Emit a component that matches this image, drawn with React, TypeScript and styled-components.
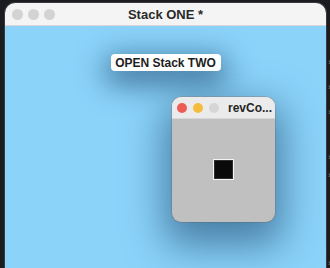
import React from "react";
import styled, { createGlobalStyle } from "styled-components";

const Global = createGlobalStyle`
  html, body { margin: 0; padding: 0; background: #1b1c1f; overflow: hidden; }
  body { font-family: "Liberation Sans", Arial, sans-serif; }
`;

const Desktop = styled.div`
  display: flex;
  height: 268px;
  padding: 3px 0 0 5px;
  box-sizing: border-box;
  gap: 1px;
`;

const Window = styled.div`
  width: 321px;
  display: flex;
  flex-direction: column;
  border-radius: 10px 10px 0 0;
  overflow: hidden;
  box-shadow: 0 0 0 1px #3a3a3c;
`;

const TitleBar = styled.div<{ $h: number; $bg: string }>`
  height: ${(p) => p.$h}px;
  flex: none;
  display: flex;
  align-items: center;
  position: relative;
  background: ${(p) => p.$bg};
  border-bottom: 1px solid #d8d8d8;
  box-sizing: border-box;
`;

const Lights = styled.div<{ $left: number; $gap: number }>`
  display: flex;
  gap: ${(p) => p.$gap}px;
  padding-left: ${(p) => p.$left}px;
`;

const Light = styled.span<{ $c: string; $size: number }>`
  width: ${(p) => p.$size}px;
  height: ${(p) => p.$size}px;
  border-radius: 50%;
  background: ${(p) => p.$c};
  display: block;
`;

const MainTitle = styled.div`
  position: absolute;
  left: 0;
  right: 0;
  text-align: center;
  font-weight: bold;
  font-size: 13px;
  color: #2a2a2a;
`;

const SmallTitle = styled.div`
  margin-left: 9px;
  font-weight: bold;
  font-size: 12px;
  color: #262626;
  white-space: nowrap;
`;

const Content = styled.div`
  flex: 1;
  background: #8bd3f9;
  position: relative;
  display: flex;
  flex-direction: column;
  align-items: center;
`;

const OpenButton = styled.button`
  margin-top: 28px;
  width: 110px;
  height: 17px;
  padding: 0;
  border: none;
  border-radius: 4px;
  background: #ffffff;
  font-family: "Liberation Sans", Arial, sans-serif;
  font-weight: bold;
  font-size: 12px;
  color: #1e1e1e;
  box-shadow: 0 8px 28px 6px rgba(20, 60, 100, 0.6);
`;

const SubWindow = styled.div`
  position: absolute;
  left: 167px;
  top: 71px;
  width: 103px;
  height: 125px;
  border-radius: 9px;
  overflow: hidden;
  display: flex;
  flex-direction: column;
  background: #c0c0c0;
  box-shadow: 0 16px 38px 8px rgba(20, 60, 100, 0.55), 0 0 0 0.5px #9a9a9a;
`;

const SubBody = styled.div`
  flex: 1;
  display: flex;
  justify-content: center;
  padding-top: 40px;
`;

const BlackSquare = styled.div`
  width: 21px;
  height: 21px;
  box-sizing: border-box;
  border: 1px solid #f4f4f4;
  background: #0a0a0a;
  box-shadow: inset 0 0 0 1px #2e2e2e;
`;

const SideStrip = styled.div`
  position: relative;
  flex: 1;
  color: #8a8a8a;
  font-size: 9px;
`;

const Chevron = styled.span<{ $top: number }>`
  position: absolute;
  left: 1px;
  top: ${(p) => p.$top}px;
  line-height: 1;
`;

export default function App() {
  return (
    <>
      <Global />
      <Desktop>
        <Window>
          <TitleBar $h={23} $bg="#f4f4f4">
            <Lights $left={7} $gap={5}>
              <Light $c="#d3d3d3" $size={11} />
              <Light $c="#d3d3d3" $size={11} />
              <Light $c="#d3d3d3" $size={11} />
            </Lights>
            <MainTitle>Stack ONE *</MainTitle>
          </TitleBar>
          <Content>
            <OpenButton>OPEN Stack TWO</OpenButton>
            <SubWindow>
              <TitleBar $h={22} $bg="#ebebeb">
                <Lights $left={5} $gap={6}>
                  <Light $c="#ee5d55" $size={10} />
                  <Light $c="#f5bd3f" $size={10} />
                  <Light $c="#d6d6d6" $size={10} />
                </Lights>
                <SmallTitle>revCo...</SmallTitle>
              </TitleBar>
              <SubBody>
                <BlackSquare />
              </SubBody>
            </SubWindow>
          </Content>
        </Window>
        <SideStrip>
          <Chevron $top={55}>›</Chevron>
          <Chevron $top={80}>›</Chevron>
          <Chevron $top={105}>›</Chevron>
          <Chevron $top={150}>›</Chevron>
          <Chevron $top={168}>›</Chevron>
          <Chevron $top={256}>›</Chevron>
        </SideStrip>
      </Desktop>
    </>
  );
}
